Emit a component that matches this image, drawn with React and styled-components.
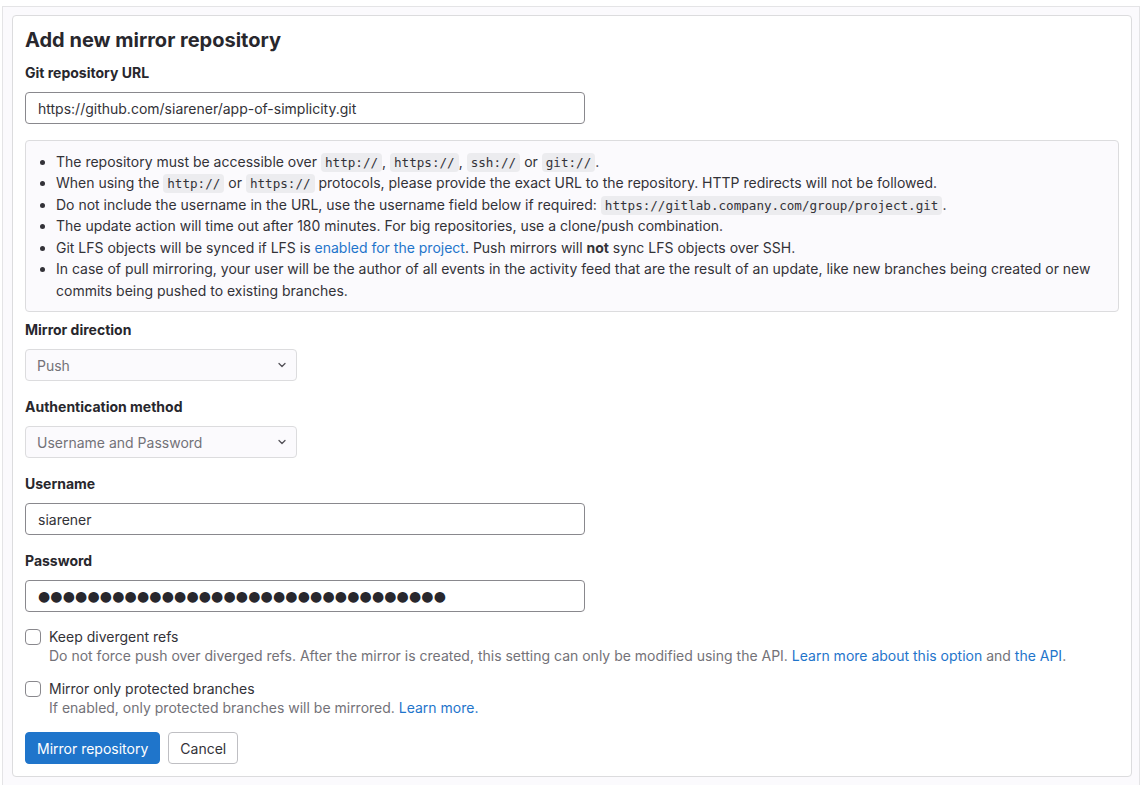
import React from 'react'
import styled, { createGlobalStyle } from 'styled-components'

const GlobalStyle = createGlobalStyle`
  html, body {
    margin: 0;
    padding: 0;
    background: #ffffff;
  }
  body {
    font-family: Inter, "Noto Sans", "Liberation Sans", sans-serif;
    font-size: 14px;
    color: #333238;
  }
  * {
    box-sizing: border-box;
  }
`

const Shell = styled.div`
  margin: 6px 0 0 2px;
  width: 1138px;
  height: 779px;
  background: #fbfafd;
  border: 1px solid #e4e4e6;
  border-bottom: none;
  padding: 8px 7px 0 9px;
`

const Card = styled.form`
  background: #ffffff;
  border: 1px solid #dcdcde;
  border-radius: 4px;
  padding: 12px 12px 12px 12px;
`

const Title = styled.h4`
  margin: 0 0 11px;
  font-size: 20px;
  line-height: 24px;
  font-weight: 700;
  color: #28272d;
`

const Group = styled.div`
  margin-bottom: ${(p) => p.$mb ?? 16}px;
`

const Label = styled.label`
  display: block;
  font-weight: 700;
  line-height: 20px;
  margin-bottom: 9px;
  color: #28272d;
`

const TextInput = styled.input`
  display: block;
  width: 560px;
  height: 32px;
  padding: 0 12px;
  border: 1px solid #89888d;
  border-radius: 4px;
  font-family: Inter, "Noto Sans", sans-serif;
  font-size: 14px;
  color: #333238;
  background: #ffffff;
  outline: none;
`

const Dots = styled(TextInput)`
  font-family: "DejaVu Sans", Inter, sans-serif;
  font-size: 14px;
  letter-spacing: 0.15px;
  color: #28272d;
`

const Callout = styled.div`
  margin: 16px 0 8px;
  padding: 10px 15px;
  background: #fbfafd;
  border: 1px solid #dcdcde;
  border-radius: 4px;
`

const List = styled.ul`
  margin: 0;
  padding-left: 15px;
  line-height: 21.45px;
`

const Item = styled.li`
  color: #333238;
`

const Code = styled.code`
  font-family: "DejaVu Sans Mono", "Liberation Mono", monospace;
  font-size: 12.6px;
  line-height: 1;
  background: #ececef;
  border-radius: 4px;
  padding: 2px 4px;
  color: #333238;
`

const Link = styled.a`
  color: #1f75cb;
  text-decoration: none;
`

const SelectWrap = styled.div`
  position: relative;
  width: 272px;
`

const Select = styled.select`
  display: block;
  width: 100%;
  height: 32px;
  padding: 0 32px 0 11px;
  appearance: none;
  border: 1px solid #dcdcde;
  border-radius: 4px;
  background: #fbfafd;
  font-family: Inter, "Noto Sans", sans-serif;
  font-size: 14px;
  color: #737278;
  opacity: 1;
`

const Chevron = styled.svg`
  position: absolute;
  right: 11px;
  top: 12px;
  pointer-events: none;
`

const CheckRow = styled.div`
  display: flex;
  gap: 8px;
  margin-bottom: ${(p) => p.$mb}px;
`

const Box = styled.span`
  flex: none;
  width: 16px;
  height: 16px;
  margin-top: 2px;
  border: 1px solid #89888d;
  border-radius: 4px;
  background: #ffffff;
`

const CheckText = styled.div`
  display: flex;
  flex-direction: column;
`

const CheckLabel = styled.span`
  line-height: 20px;
  color: #333238;
`

const Help = styled.span`
  line-height: 18px;
  color: #737278;
`

const Actions = styled.div`
  display: flex;
  gap: 8px;
  margin-top: 15px;
`

const Button = styled.button`
  height: 32px;
  padding: 0 11px;
  border-radius: 4px;
  font-family: Inter, "Noto Sans", sans-serif;
  font-size: 14px;
  cursor: pointer;
  border: 1px solid ${(p) => (p.$primary ? '#1f75cb' : '#bfbfc3')};
  background: ${(p) => (p.$primary ? '#1f75cb' : '#ffffff')};
  color: ${(p) => (p.$primary ? '#ffffff' : '#333238')};
`

function ChevronDown() {
  return (
    <Chevron width="8" height="8" viewBox="0 0 8 8">
      <path d="M1 2.5 L4 5.5 L7 2.5" fill="none" stroke="#535158" strokeWidth="1.3" strokeLinecap="round" strokeLinejoin="round" />
    </Chevron>
  )
}

function Checkbox({ label, children, mb }) {
  return (
    <CheckRow $mb={mb}>
      <Box />
      <CheckText>
        <CheckLabel>{label}</CheckLabel>
        <Help>{children}</Help>
      </CheckText>
    </CheckRow>
  )
}

export default function App() {
  return (
    <>
      <GlobalStyle />
      <Shell>
        <Card onSubmit={(e) => e.preventDefault()}>
          <Title>Add new mirror repository</Title>

          <Label>Git repository URL</Label>
          <TextInput defaultValue="https://github.com/siarener/app-of-simplicity.git" />

          <Callout>
            <List>
              <Item>
                The repository must be accessible over <Code>http://</Code>, <Code>https://</Code>, <Code>ssh://</Code> or <Code>git://</Code>.
              </Item>
              <Item>
                When using the <Code>http://</Code> or <Code>https://</Code> protocols, please provide the exact URL to the repository. HTTP redirects will not be followed.
              </Item>
              <Item>
                Do not include the username in the URL, use the username field below if required: <Code>https://gitlab.company.com/group/project.git</Code>.
              </Item>
              <Item>The update action will time out after 180 minutes. For big repositories, use a clone/push combination.</Item>
              <Item>
                Git LFS objects will be synced if LFS is <Link href="#">enabled for the project</Link>. Push mirrors will <strong>not</strong> sync LFS objects over SSH.
              </Item>
              <Item>
                In case of pull mirroring, your user will be the author of all events in the activity feed that are the result of an update, like new branches being created or new commits being pushed to existing branches.
              </Item>
            </List>
          </Callout>

          <Group>
            <Label>Mirror direction</Label>
            <SelectWrap>
              <Select disabled defaultValue="push">
                <option value="push">Push</option>
              </Select>
              <ChevronDown />
            </SelectWrap>
          </Group>

          <Group>
            <Label>Authentication method</Label>
            <SelectWrap>
              <Select disabled defaultValue="password">
                <option value="password">Username and Password</option>
              </Select>
              <ChevronDown />
            </SelectWrap>
          </Group>

          <Group>
            <Label>Username</Label>
            <TextInput defaultValue="siarener" />
          </Group>

          <Group $mb={15}>
            <Label>Password</Label>
            <Dots readOnly aria-label="Password" value={'●'.repeat(33)} />
          </Group>

          <Checkbox label="Keep divergent refs" mb={14}>
            Do not force push over diverged refs. After the mirror is created, this setting can only be modified using the API.{' '}
            <Link href="#">Learn more about this option</Link> and <Link href="#">the API</Link>.
          </Checkbox>

          <Checkbox label="Mirror only protected branches" mb={0}>
            If enabled, only protected branches will be mirrored. <Link href="#">Learn more.</Link>
          </Checkbox>

          <Actions>
            <Button type="submit" $primary>Mirror repository</Button>
            <Button type="button">Cancel</Button>
          </Actions>
        </Card>
      </Shell>
    </>
  )
}
